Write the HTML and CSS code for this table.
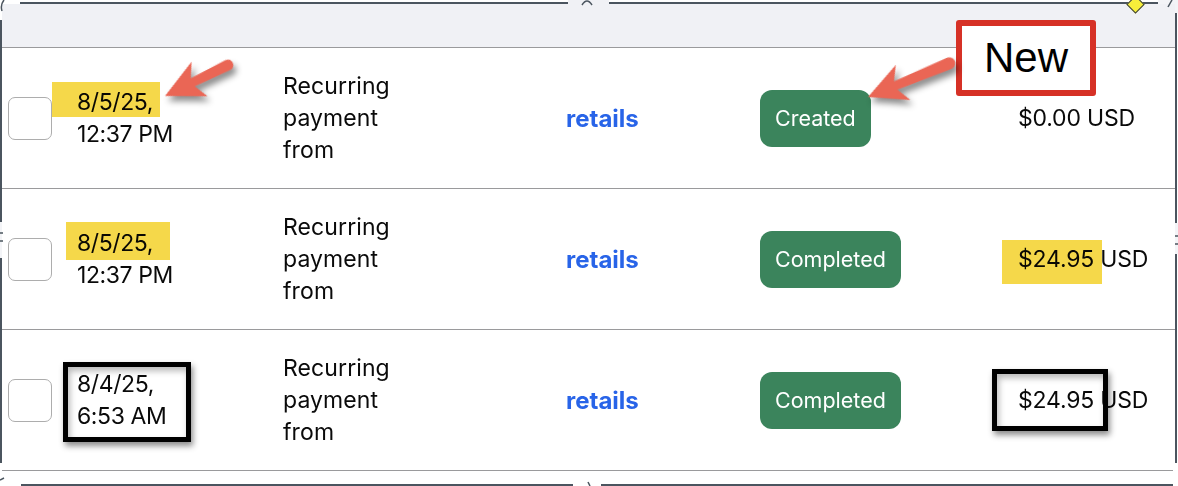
FILE: index.html
```html
<!DOCTYPE html>
<html lang="en">
<head>
<meta charset="utf-8">
<title>Transactions</title>
<link rel="stylesheet" href="styles.css">
</head>
<body>
<div class="page">
  <div class="frame">
    <div class="thead"></div>
    <div class="row">
      <div class="cell cell-check"><span class="checkbox"></span></div>
      <div class="cell cell-date"><span class="date">8/5/25, 12:37 PM</span></div>
      <div class="cell cell-desc"><span class="desc">Recurring payment from</span></div>
      <div class="cell cell-name"><a class="name" href="#">retails</a></div>
      <div class="cell cell-status"><span class="badge">Created</span></div>
      <div class="cell cell-amount"><span class="amount">$0.00 USD</span></div>
    </div>
    <div class="row">
      <div class="cell cell-check"><span class="checkbox"></span></div>
      <div class="cell cell-date"><span class="date">8/5/25, 12:37 PM</span></div>
      <div class="cell cell-desc"><span class="desc">Recurring payment from</span></div>
      <div class="cell cell-name"><a class="name" href="#">retails</a></div>
      <div class="cell cell-status"><span class="badge">Completed</span></div>
      <div class="cell cell-amount"><span class="amount">$24.95 USD</span></div>
    </div>
    <div class="row">
      <div class="cell cell-check"><span class="checkbox"></span></div>
      <div class="cell cell-date"><span class="date">8/4/25, 6:53 AM</span></div>
      <div class="cell cell-desc"><span class="desc">Recurring payment from</span></div>
      <div class="cell cell-name"><a class="name" href="#">retails</a></div>
      <div class="cell cell-status"><span class="badge">Completed</span></div>
      <div class="cell cell-amount"><span class="amount">$24.95 USD</span></div>
    </div>
  </div>

  <!-- selection frame handles -->
  <span class="gap gap-tl-top"></span>
  <span class="gap gap-tl-left"></span>
  <span class="gap gap-top-mid"></span>
  <span class="gap gap-tr-top"></span>
  <span class="gap gap-tr-right"></span>
  <span class="gap gap-left-mid"></span>
  <span class="gap gap-right-mid"></span>
  <span class="gap gap-bl-bottom"></span>
  <span class="gap gap-bl-left"></span>
  <span class="gap gap-bottom-mid"></span>
  <span class="gap gap-br-right"></span>
  <span class="diamond"></span>

  <!-- annotations -->
  <span class="hl hl-1"></span>
  <span class="hl hl-2"></span>
  <span class="hl hl-3"></span>
  <span class="box box-date"></span>
  <span class="box box-amount"></span>
  <div class="callout">New</div>

  <svg class="marks" width="1178" height="486" viewBox="0 0 1178 486" aria-hidden="true">
    <g class="handles" fill="none" stroke="#4b555f" stroke-width="1.5">
      <path d="M582 5 Q587 -3 592 5"/>
      <path d="M4 0 Q0 5 2 11"/>
      <path d="M1168 7 L1172 0"/>
      <path d="M0 233 L3 233 M0 241 L3 241"/>
      <path d="M1175 236 L1178 236 M1175 244 L1178 244"/>
      <path d="M0 480 L4 478"/>
      <path d="M588 482 L590 486"/>
    </g>
    <g class="arrows" fill="#ea6655">
      <path transform="translate(165 96) rotate(-26.2)" d="M0 0 L39 -19 L31 -4.5 L70 -5.5 A5.5 5.5 0 0 1 70 5.5 L31 4.5 L38 19 Z"/>
      <path transform="translate(868 97) rotate(-22.5)" d="M0 0 L38 -19 L30 -4.5 L88 -6 A6 6 0 0 1 88 6 L30 4.5 L38 19 Z"/>
    </g>
  </svg>
</div>
</body>
</html>
```

FILE: styles.css
```css
* { box-sizing: border-box; }

html, body {
  margin: 0;
  padding: 0;
  background: #ffffff;
}

body {
  font-family: Inter, "Liberation Sans", sans-serif;
  color: #0a0a0a;
}

.page {
  position: relative;
  width: 1178px;
  height: 486px;
  overflow: hidden;
  background: #ffffff;
}

.frame {
  margin: 2px 1px 0 0;
  height: 484px;
  border: 2px solid #4b555f;
  display: flex;
  flex-direction: column;
  background: #ffffff;
}

.thead {
  height: 44px;
  flex: none;
  background: #f0f1f5;
  border-bottom: 1px solid #9a9a9c;
}

.row {
  flex: none;
  height: 141px;
  display: grid;
  grid-template-columns: 75px 206px 283px 194px 258px 1fr;
  align-items: center;
  border-bottom: 1px solid #9a9a9c;
}

.cell {
  display: flex;
  align-items: center;
}

.cell-check {
  padding-left: 6px;
}

.checkbox {
  display: block;
  width: 44px;
  height: 43px;
  border: 1px solid #adadad;
  border-radius: 7px;
  background: #ffffff;
}

.date,
.desc,
.amount {
  font-size: 23px;
  line-height: 32px;
}

.date {
  max-width: 112px;
  letter-spacing: -0.4px;
}

.desc {
  max-width: 125px;
  letter-spacing: 0.1px;
}

.amount {
  letter-spacing: -0.2px;
}

.name {
  font-size: 24px;
  font-weight: 700;
  color: #2864e8;
  text-decoration: none;
  letter-spacing: 0;
}

.badge {
  display: inline-flex;
  align-items: center;
  height: 57px;
  padding: 0 15px;
  border-radius: 12px;
  background: #3b845c;
  color: #ffffff;
  font-size: 21.5px;
  letter-spacing: 0;
}

/* selection frame gaps */
.gap {
  position: absolute;
  background: #ffffff;
}
.gap-tl-top { left: 0; top: 0; width: 20px; height: 4px; }
.gap-tl-left { left: 0; top: 0; width: 2px; height: 20px; }
.gap-top-mid { left: 568px; top: 0; width: 41px; height: 4px; background: #f0f1f5; }
.gap-tr-top { left: 1158px; top: 0; width: 20px; height: 4px; background: #f3f4f7; }
.gap-tr-right { left: 1175px; top: 0; width: 3px; height: 13px; background: #f3f4f7; }
.gap-left-mid { left: 0; top: 222px; width: 2px; height: 36px; background: #f3f4f7; }
.gap-right-mid { left: 1175px; top: 223px; width: 3px; height: 31px; background: #f3f4f7; }
.gap-bl-bottom { left: 0; top: 482px; width: 21px; height: 4px; }
.gap-bl-left { left: 0; top: 463px; width: 2px; height: 23px; }
.gap-bottom-mid { left: 573px; top: 482px; width: 28px; height: 4px; }
.gap-br-right { left: 1173px; top: 463px; width: 5px; height: 23px; }

.diamond {
  position: absolute;
  left: 1129px;
  top: -2px;
  width: 13px;
  height: 13px;
  background: #f7ef3a;
  border: 1.5px solid #3a3f45;
  transform: rotate(45deg);
}

/* annotations */
.hl {
  position: absolute;
  background: #f5d84a;
  mix-blend-mode: multiply;
}
.hl-1 { left: 52px; top: 82px; width: 108px; height: 35px; }
.hl-2 { left: 66px; top: 222px; width: 104px; height: 38px; }
.hl-3 { left: 1002px; top: 240px; width: 100px; height: 44px; }

.box {
  position: absolute;
  border: 5px solid #000000;
  box-shadow: 2px 4px 6px rgba(0, 0, 0, 0.45), inset 2px 4px 6px rgba(0, 0, 0, 0.28);
}
.box-date { left: 63px; top: 362px; width: 128px; height: 80px; }
.box-amount { left: 992px; top: 369px; width: 116px; height: 62px; }

.callout {
  position: absolute;
  left: 956px;
  top: 20px;
  width: 140px;
  height: 76px;
  border: 6px solid #d63126;
  border-radius: 3px;
  background: #ffffff;
  display: flex;
  align-items: center;
  justify-content: center;
  font-family: "Liberation Sans", Arial, sans-serif;
  font-size: 42px;
  color: #000000;
}

.marks {
  position: absolute;
  left: 0;
  top: 0;
  pointer-events: none;
}

.arrows {
  filter: drop-shadow(3px 5px 3px rgba(0, 0, 0, 0.45));
}
```
